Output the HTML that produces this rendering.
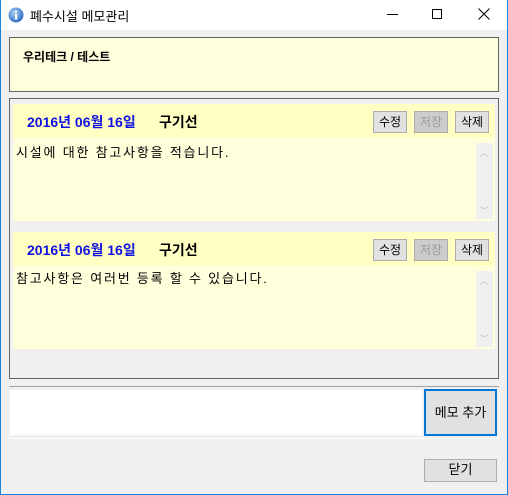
<!DOCTYPE html>
<html><head><meta charset="utf-8"><style>
*{margin:0;padding:0;box-sizing:border-box}
body{width:508px;height:495px;background:#f0f0f0;font-family:"Liberation Sans","Noto Sans CJK KR",sans-serif;font-size:12px;position:relative;overflow:hidden;color:#000}
.a{position:absolute}
.btn{position:absolute;border:1px solid #adadad;background:#e1e1e1;font-size:12px;text-align:center;line-height:20px}
.t{font-size:13px;letter-spacing:1.8px}
</style></head><body>
<div class="a" style="left:0;top:0;width:508px;height:495px;border:1px solid #1883d7;border-top:none"></div>
<div class="a" style="left:1px;top:0;width:506px;height:30px;background:#fff"></div>
<svg class="a" style="left:8px;top:7px" width="16" height="16"><defs><radialGradient id="g" cx="40%" cy="35%" r="65%"><stop offset="0" stop-color="#a8d0f5"/><stop offset="1" stop-color="#2c6fc4"/></radialGradient></defs><circle cx="8" cy="8" r="7.5" fill="url(#g)"/><rect x="7" y="7" width="2.2" height="5.5" fill="#fff"/><rect x="7" y="3.6" width="2.2" height="2" fill="#fff"/></svg>
<div class="a" style="left:30px;top:6px;font-size:13px">폐수시설 메모관리</div>
<div class="a" style="left:387px;top:14px;width:11px;height:1px;background:#000"></div>
<div class="a" style="left:432px;top:9px;width:10px;height:10px;border:1px solid #000"></div>
<svg class="a" style="left:478px;top:8px" width="12" height="12"><path d="M0.5 0.5L11.5 11.5M11.5 0.5L0.5 11.5" stroke="#000" stroke-width="1"/></svg>

<div class="a" style="left:9px;top:37px;width:490px;height:55px;background:#ffffdd;border:1px solid #646464"></div>
<div class="a" style="left:23px;top:48px;font-size:12px;font-weight:bold">우리테크 / 테스트</div>

<div class="a" style="left:9px;top:98px;width:490px;height:281px;border:1px solid #646464"></div>

<div class="a" style="left:13px;top:104px;width:482px;height:34px;background:#ffffc4"></div>
<div class="a" style="left:13px;top:138px;width:482px;height:83px;background:#ffffdc"></div>
<div class="a" style="left:27px;top:112px;font-size:14px;font-weight:bold;color:#1010e0">2016년 06월 16일</div>
<div class="a" style="left:159px;top:112px;font-size:14px;font-weight:bold">구기선</div>
<div class="btn" style="left:373px;top:111px;width:34px;height:22px">수정</div>
<div class="btn" style="left:414px;top:111px;width:34px;height:22px;background:#ccc;color:#999">저장</div>
<div class="btn" style="left:455px;top:111px;width:34px;height:22px">삭제</div>
<div class="a t" style="left:16px;top:142px">시설에 대한 참고사항을 적습니다.</div>
<div class="a" style="left:476px;top:143px;width:17px;height:76px;background:#f0f0f0;color:#bbb;font-size:9px;text-align:center">
<div style="margin-top:3px">︿</div><div style="position:absolute;bottom:2px;width:17px">﹀</div></div>

<div class="a" style="left:13px;top:232px;width:482px;height:34px;background:#ffffc4"></div>
<div class="a" style="left:13px;top:266px;width:482px;height:83px;background:#ffffdc"></div>
<div class="a" style="left:27px;top:240px;font-size:14px;font-weight:bold;color:#1010e0">2016년 06월 16일</div>
<div class="a" style="left:159px;top:240px;font-size:14px;font-weight:bold">구기선</div>
<div class="btn" style="left:373px;top:239px;width:34px;height:22px">수정</div>
<div class="btn" style="left:414px;top:239px;width:34px;height:22px;background:#ccc;color:#999">저장</div>
<div class="btn" style="left:455px;top:239px;width:34px;height:22px">삭제</div>
<div class="a t" style="left:16px;top:268px">참고사항은 여러번 등록 할 수 있습니다.</div>
<div class="a" style="left:476px;top:271px;width:17px;height:76px;background:#f0f0f0;color:#bbb;font-size:9px;text-align:center">
<div style="margin-top:3px">︿</div><div style="position:absolute;bottom:2px;width:17px">﹀</div></div>

<div class="a" style="left:9px;top:386px;width:490px;height:53px;border-top:1px solid #a0a0a0;border-bottom:1px solid #fff"></div>
<div class="a" style="left:10px;top:390px;width:412px;height:45px;background:#fff"></div>
<div class="btn" style="left:424px;top:389px;width:73px;height:47px;border:2px solid #0078d7;line-height:43px;font-size:13px">메모 추가</div>
<div class="btn" style="left:424px;top:459px;width:73px;height:23px;font-size:13px">닫기</div>
</body></html>
